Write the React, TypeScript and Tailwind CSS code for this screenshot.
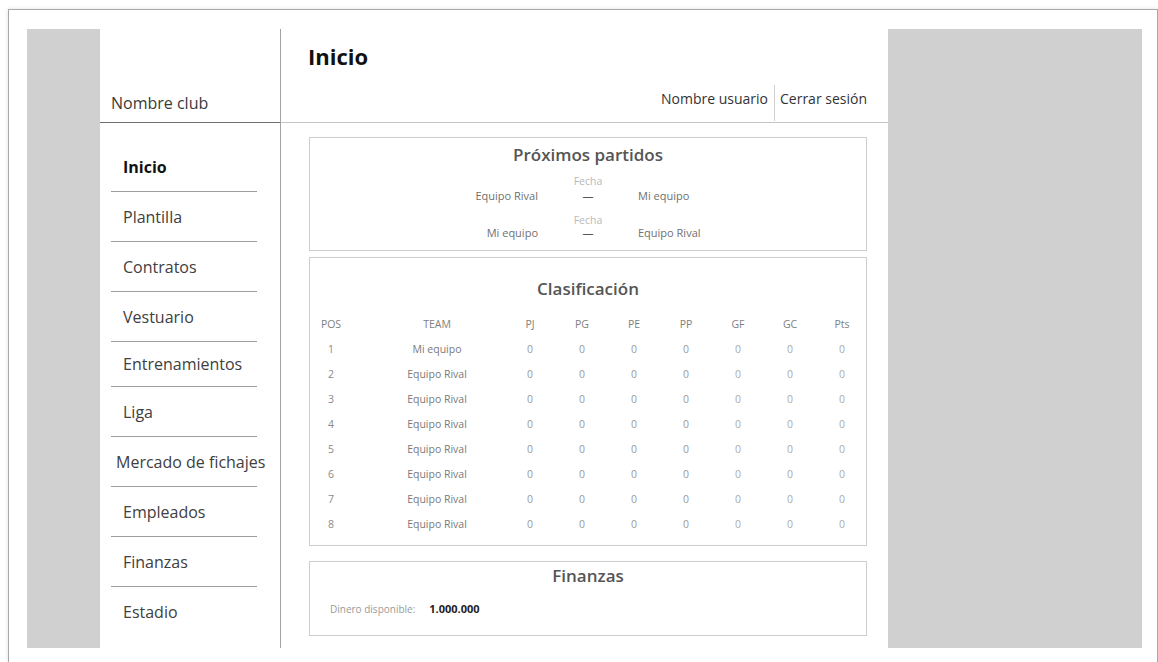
import React from "react";

const menu: { label: string; active?: boolean; h: string; pl: string; last?: boolean }[] = [
  { label: "Inicio", active: true, h: "h-[50px]", pl: "pl-[12px]" },
  { label: "Plantilla", h: "h-[50px]", pl: "pl-[12px]" },
  { label: "Contratos", h: "h-[50px]", pl: "pl-[12px]" },
  { label: "Vestuario", h: "h-[50px]", pl: "pl-[12px]" },
  { label: "Entrenamientos", h: "h-[45px]", pl: "pl-[12px]" },
  { label: "Liga", h: "h-[50px]", pl: "pl-[12px]" },
  { label: "Mercado de fichajes", h: "h-[50px]", pl: "pl-[5px]" },
  { label: "Empleados", h: "h-[50px]", pl: "pl-[12px]" },
  { label: "Finanzas", h: "h-[50px]", pl: "pl-[12px]" },
  { label: "Estadio", h: "h-[50px]", pl: "pl-[12px]", last: true },
];

const standings = [
  { pos: 1, team: "Mi equipo" },
  { pos: 2, team: "Equipo Rival" },
  { pos: 3, team: "Equipo Rival" },
  { pos: 4, team: "Equipo Rival" },
  { pos: 5, team: "Equipo Rival" },
  { pos: 6, team: "Equipo Rival" },
  { pos: 7, team: "Equipo Rival" },
  { pos: 8, team: "Equipo Rival" },
];

const stats = ["PJ", "PG", "PE", "PP", "GF", "GC", "Pts"];

function Sidebar() {
  return (
    <aside className="w-[181px] shrink-0 border-r border-[#a3a3a3] flex flex-col">
      <div className="h-[94px] border-b border-[#6f6f6f] flex items-end pl-[11px] pb-[7px]">
        <span className="text-[16px] leading-[24px] text-[#3a3a3a]">Nombre club</span>
      </div>
      <nav className="pt-[19px] pl-[11px] pr-[23px]">
        {menu.map((m) => (
          <div
            key={m.label}
            className={`${m.h} ${m.pl} flex items-center whitespace-nowrap text-[16px] ${
              m.last ? "" : "border-b border-[#9e9e9e]"
            } ${m.active ? "font-bold text-[#111]" : "text-[#404040]"}`}
          >
            {m.label}
          </div>
        ))}
      </nav>
    </aside>
  );
}

function MatchRow({ home, away, second }: { home: string; away: string; second?: boolean }) {
  return (
    <div className={second ? "mt-[11px]" : "mt-[8px]"}>
      <div className="grid grid-cols-[1fr_100px_1fr]">
        <div />
        <div className="text-center text-[10.5px] leading-[12px] text-[#b9b9b9]">Fecha</div>
        <div />
      </div>
      <div
        className={`grid grid-cols-[1fr_100px_1fr] text-[11px] leading-[14px] text-[#707070] ${
          second ? "mt-0" : "mt-[2px]"
        }`}
      >
        <div className="text-right">{home}</div>
        <div className="text-center text-[#555]">—</div>
        <div className="text-left">{away}</div>
      </div>
    </div>
  );
}

function Card({ className, children }: { className: string; children: React.ReactNode }) {
  return (
    <section className={`border border-[#cdcdcd] bg-white ${className}`}>{children}</section>
  );
}

function Main() {
  return (
    <main className="w-[607px] shrink-0 flex flex-col">
      <header className="h-[94px] border-b border-[#c4c4c4] flex flex-col">
        <h1 className="pl-[27px] pt-[12px] text-[22px] leading-[30px] font-bold text-[#111]">Inicio</h1>
        <div className="mt-auto mb-[1px] h-[36px] flex justify-end pr-[21px] text-[14px] leading-[20px] text-[#333]">
          <span className="pt-[4px] pr-[6px]">Nombre usuario</span>
          <span className="w-px bg-[#cfcfcf]" />
          <span className="pt-[4px] pl-[5px]">Cerrar sesión</span>
        </div>
      </header>

      <div className="pl-[28px] pr-[21px] pt-[14px]">
        <Card className="h-[114px] pt-[5px]">
          <h2 className="text-center text-[17px] leading-[24px] font-semibold text-[#555]">
            Próximos partidos
          </h2>
          <MatchRow home="Equipo Rival" away="Mi equipo" />
          <MatchRow home="Mi equipo" away="Equipo Rival" second />
        </Card>

        <Card className="mt-[6px] pt-[19px] pb-[8px]">
          <h2 className="text-center text-[17px] leading-[24px] font-semibold text-[#555]">
            Clasificación
          </h2>
          <div className="mt-[11px] text-[10.5px]">
            <div className="grid grid-cols-[42px_152px_repeat(7,52px)] h-[25px] items-center text-[#808080]">
              <div className="text-center">POS</div>
              <div className="pl-[18px] text-center">TEAM</div>
              {stats.map((s) => (
                <div key={s} className="text-center">
                  {s}
                </div>
              ))}
            </div>
            {standings.map((r) => (
              <div
                key={r.pos}
                className="grid grid-cols-[42px_152px_repeat(7,52px)] h-[25px] items-center"
              >
                <div className="text-center text-[#8a8a8a]">{r.pos}</div>
                <div className="pl-[18px] text-center text-[#7a7a7a]">{r.team}</div>
                {stats.map((s, i) => (
                  <div key={s} className={`text-center ${i < 4 ? "text-[#9a9a9a]" : "text-[#ababab]"}`}>
                    0
                  </div>
                ))}
              </div>
            ))}
          </div>
        </Card>

        <Card className="mt-[15px] h-[75px] pt-[2px]">
          <h2 className="text-center text-[17px] leading-[24px] font-semibold text-[#555]">Finanzas</h2>
          <div className="mt-[14px] pl-[20px] flex items-center leading-[14px]">
            <span className="text-[10px] text-[#9a9a9a]">Dinero disponible:</span>
            <span className="ml-[14px] text-[11px] font-bold text-[#222]">1.000.000</span>
          </div>
        </Card>
      </div>
    </main>
  );
}

export default function App() {
  return (
    <div className="w-[1158px] h-[662px] bg-white overflow-hidden font-['Open_Sans',sans-serif]">
      <div className="ml-[8px] mt-[9px] w-[1150px] h-[653px] border-t border-l border-r border-[#a9a9a9] shadow-[0_0_4px_rgba(0,0,0,0.12)] pl-[18px] pt-[19px]">
        <div className="flex h-[619px]">
          <div className="w-[73px] shrink-0 bg-[#d0d0d0]" />
          <Sidebar />
          <Main />
          <div className="w-[254px] shrink-0 bg-[#d0d0d0]" />
        </div>
      </div>
    </div>
  );
}
